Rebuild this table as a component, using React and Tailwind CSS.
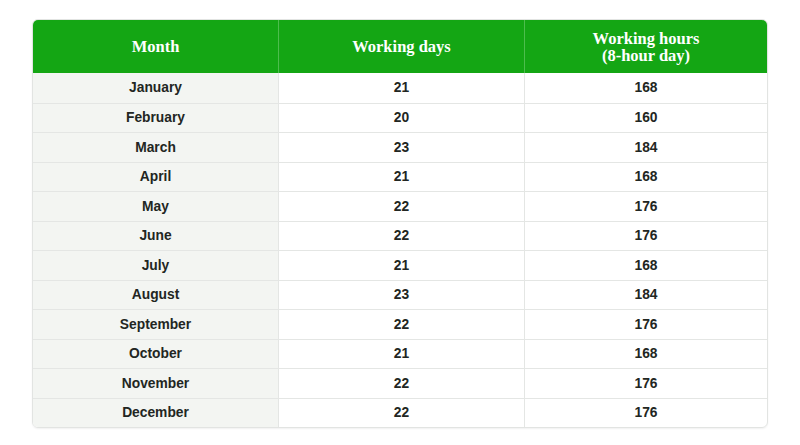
import React from "react";

const rows = [
  ["January", 21, 168],
  ["February", 20, 160],
  ["March", 23, 184],
  ["April", 21, 168],
  ["May", 22, 176],
  ["June", 22, 176],
  ["July", 21, 168],
  ["August", 23, 184],
  ["September", 22, 176],
  ["October", 21, 168],
  ["November", 22, 176],
  ["December", 22, 176],
];

export default function App() {
  return (
    <div className="w-[800px] h-[445px] bg-white pt-[19px] pl-[32px]">
      <div className="w-[736px] rounded-[6px] border border-[#e2e4e2] overflow-hidden shadow-[0_1px_2px_rgba(0,0,0,0.06)]">
        <div className="grid grid-cols-[246px_246px_1fr] h-[53px] bg-[#14a614] text-white font-bold text-[16.5px] leading-[17px] text-center" style={{ fontFamily: '"Liberation Serif", "DejaVu Serif", serif' }}>
          <div className="flex items-center justify-center border-r border-[#4dbd4d]">Month</div>
          <div className="flex items-center justify-center border-r border-[#4dbd4d]">Working days</div>
          <div className="flex flex-col items-center justify-center">
            <span>Working hours</span>
            <span>(8-hour day)</span>
          </div>
        </div>
        {rows.map(([m, d, h], i) => (
          <div
            key={m}
            className={`grid grid-cols-[246px_246px_1fr] h-[29.5px] text-[13.8px] font-bold text-[#222622] text-center ${i > 0 ? "border-t border-[#e4e6e4]" : ""}`}
            style={{ fontFamily: '"Liberation Sans", Arial, sans-serif' }}
          >
            <div className="flex items-center justify-center pt-[2px] bg-[#f3f5f2] border-r border-[#e4e6e4]">{m}</div>
            <div className="flex items-center justify-center pt-[2px] border-r border-[#e4e6e4]">{d}</div>
            <div className="flex items-center justify-center pt-[2px]">{h}</div>
          </div>
        ))}
      </div>
    </div>
  );
}
